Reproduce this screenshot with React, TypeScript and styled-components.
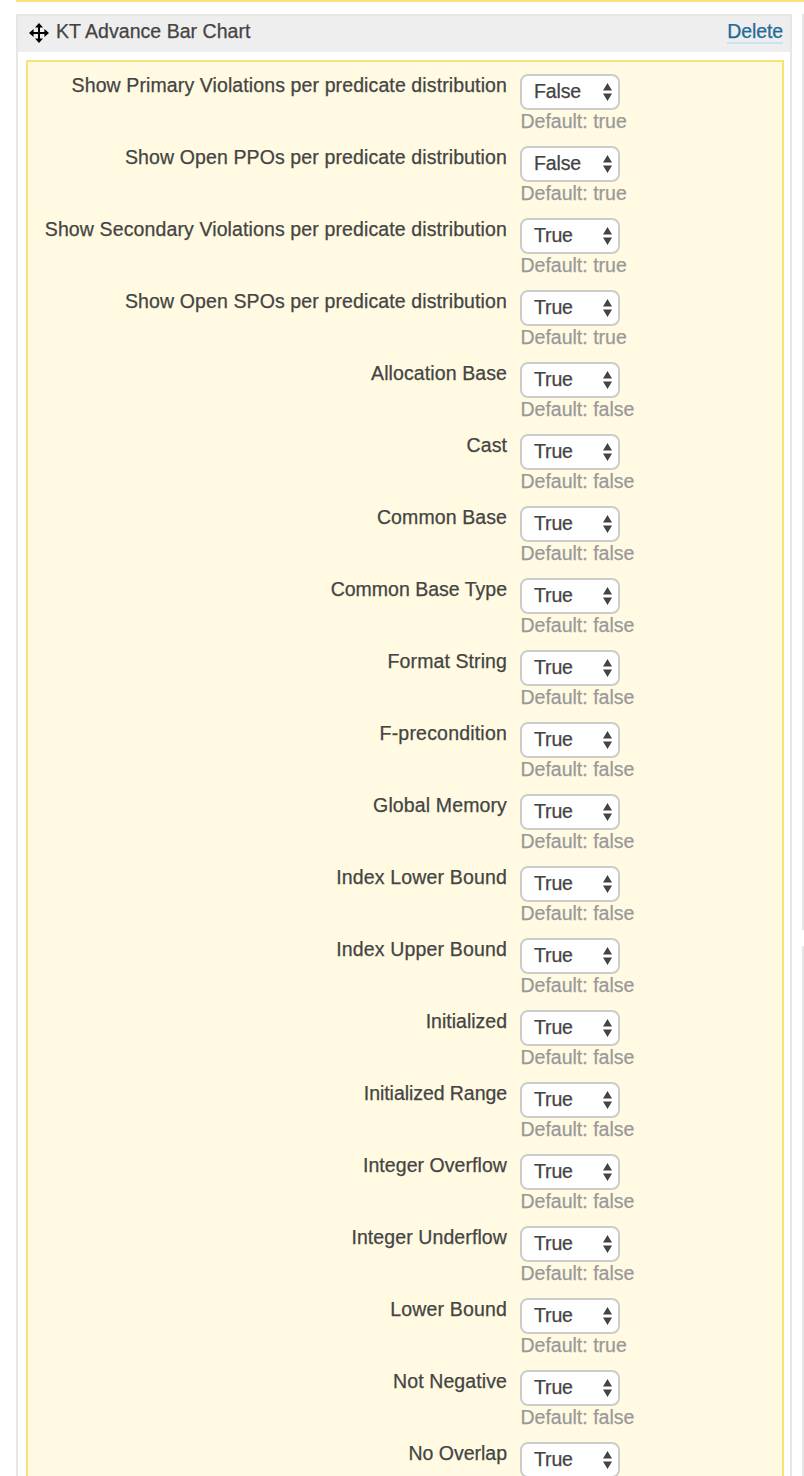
import React from "react";
import styled, { createGlobalStyle } from "styled-components";

const GlobalStyle = createGlobalStyle`
  * { box-sizing: border-box; }
  html, body { margin: 0; height: 1476px; overflow: hidden; background: #fff; }
  body {
    font-family: "Liberation Sans", Arial, sans-serif;
    font-size: 19.5px;
    line-height: 24px;
    color: #444;
    -webkit-text-stroke: 0.25px currentColor;
  }
`;

const Page = styled.div`
  width: 804px;
  height: 1476px;
  padding-left: 16px;
  overflow: hidden;
`;

const Notice = styled.div`
  height: 2px;
  margin-bottom: 12px;
  background: #fbe276;
`;

const Columns = styled.div`
  display: grid;
  grid-template-columns: 776px 776px;
  column-gap: 10px;
  align-items: start;
`;

const SideColumn = styled.div`
  display: flex;
  flex-direction: column;
  gap: 16px;
`;

const SideWidget = styled.div<{ $height: number }>`
  height: ${(p) => p.$height}px;
  border: 2px solid #e6e6e6;
`;

const Widget = styled.section`
  height: 1500px;
  border: 2px solid #e6e6e6;
`;

const WidgetHeader = styled.header`
  display: flex;
  align-items: flex-start;
  height: 36px;
  padding: 3px 7px 0 11px;
  background: #eee;
`;

const MoveIcon = styled.svg`
  flex: none;
  width: 20px;
  height: 20px;
  margin: 4px 7px 0 0;
`;

const Title = styled.span`
  flex: 1;
  letter-spacing: 0.04px;
  white-space: nowrap;
`;

const DeleteLink = styled.a`
  height: 25px;
  letter-spacing: -0.1px;
  color: #236a97;
  border-bottom: 2px solid #cae3f2;
`;

const Settings = styled.div`
  height: 1450px;
  margin: 8px 6px 0 8px;
  padding-top: 12px;
  border: 2px solid #fbe276;
  background: #fffae1;
`;

const Row = styled.div`
  display: grid;
  grid-template-columns: 479px 1fr;
  column-gap: 13px;
  height: 72px;
`;

const Label = styled.label<{ $tracking: number }>`
  line-height: 22px;
  letter-spacing: ${(p) => p.$tracking}px;
  text-align: right;
  white-space: nowrap;
`;

const Select = styled.button`
  display: flex;
  align-items: center;
  justify-content: space-between;
  width: 100px;
  height: 36px;
  padding: 0 6px 2px 12px;
  border: 2px solid #ccc;
  border-radius: 8px;
  background: #fff;
  color: #444;
  font: inherit;
  letter-spacing: -0.15px;
  -webkit-text-stroke: inherit;
`;

const Arrows = styled.svg`
  width: 9px;
  height: 18px;
  margin-top: 2px;
`;

const Hint = styled.div`
  height: 24px;
  padding-left: 0.5px;
  line-height: 23px;
  color: #999;
`;

type Setting = {
  label: string;
  value?: "True" | "False";
  fallback?: "true" | "false";
  tracking?: number;
};

const settings: Setting[] = [
  { label: "Show Primary Violations per predicate distribution", value: "False", fallback: "true", tracking: 0.11 },
  { label: "Show Open PPOs per predicate distribution", value: "False", fallback: "true", tracking: 0.12 },
  { label: "Show Secondary Violations per predicate distribution", fallback: "true", tracking: 0.12 },
  { label: "Show Open SPOs per predicate distribution", fallback: "true", tracking: 0.12 },
  { label: "Allocation Base", fallback: "false" },
  { label: "Cast", fallback: "false" },
  { label: "Common Base", fallback: "false" },
  { label: "Common Base Type", fallback: "false", tracking: 0 },
  { label: "Format String", fallback: "false" },
  { label: "F-precondition", fallback: "false", tracking: 0.2 },
  { label: "Global Memory", fallback: "false", tracking: 0.13 },
  { label: "Index Lower Bound", fallback: "false", tracking: 0.16 },
  { label: "Index Upper Bound", fallback: "false", tracking: 0.16 },
  { label: "Initialized", fallback: "false", tracking: 0 },
  { label: "Initialized Range", fallback: "false", tracking: -0.06 },
  { label: "Integer Overflow", fallback: "false", tracking: 0.06 },
  { label: "Integer Underflow", fallback: "false" },
  { label: "Lower Bound", fallback: "true", tracking: 0.16 },
  { label: "Not Negative", fallback: "false" },
  { label: "No Overlap", tracking: 0 },
];

export default function App() {
  return (
    <>
      <GlobalStyle />
      <Page>
        <Notice />
        <Columns>
          <Widget>
            <WidgetHeader>
              <MoveIcon viewBox="0 0 20 20">
                <path d="M10 3v14M3 10h14" stroke="#000" strokeWidth="2" />
                <path
                  d="M10 0l4 4.6H6zM10 20l4-4.6H6zM0 10l4.6-4v8zM20 10l-4.6-4v8z"
                  fill="#000"
                />
              </MoveIcon>
              <Title>KT Advance Bar Chart</Title>
              <DeleteLink>Delete</DeleteLink>
            </WidgetHeader>
            <Settings>
              {settings.map(({ label, value = "True", fallback, tracking = 0.1 }) => (
                <Row key={label}>
                  <Label $tracking={tracking}>{label}</Label>
                  <div>
                    <Select type="button">
                      {value}
                      <Arrows viewBox="0 0 9 18">
                        <path d="M4.5 0L9 7.5H0zM4.5 18L0 10.5h9z" fill="#444" />
                      </Arrows>
                    </Select>
                    {fallback && <Hint>Default: {fallback}</Hint>}
                  </div>
                </Row>
              ))}
            </Settings>
          </Widget>
          <SideColumn>
            <SideWidget $height={916} />
            <SideWidget $height={600} />
          </SideColumn>
        </Columns>
      </Page>
    </>
  );
}
